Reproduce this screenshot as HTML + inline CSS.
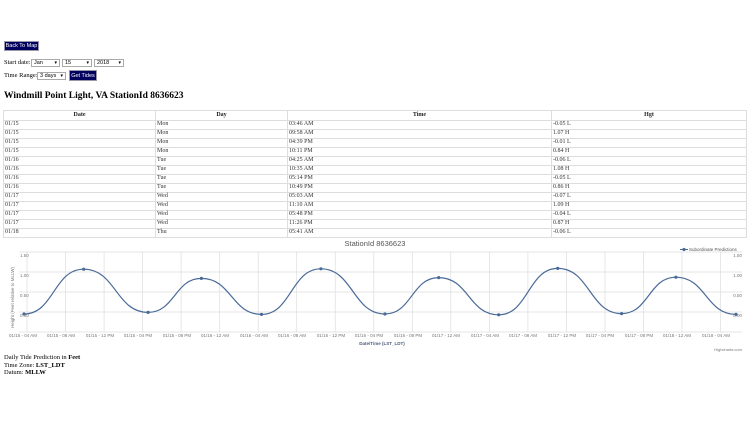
<!DOCTYPE html>
<html><head><meta charset="utf-8"><style>
*{margin:0;padding:0;box-sizing:border-box}
body{width:750px;height:422px;background:#fff;position:relative;overflow:hidden;font-family:"Liberation Serif",serif;color:#000}
.a{position:absolute;white-space:nowrap}
.btn{background:#00005e;color:#fff;font-family:"Liberation Sans",sans-serif;font-size:5.5px;border:1px solid #99a;padding:0}
.sel{border:1px solid #aaa;background:#fff;font-size:5.5px;font-family:"Liberation Sans",sans-serif;padding-left:2px;height:8px;line-height:7px}
.sel:after{content:"▾";position:absolute;right:2px;top:0;font-size:5px}
.lbl{font-size:6.5px}
table{position:absolute;left:3px;top:110px;width:744px;border-collapse:collapse;font-size:6px;color:#333}
td,th{border:1px solid #ddd;height:9px;padding:0 1px;line-height:7px;font-weight:normal}
th{font-weight:bold;color:#222;height:9.5px}
</style></head><body>
<div class="a btn" style="left:4px;top:41px;width:35px;height:10px;line-height:9px;text-align:center">Back To Map</div>
<div class="a lbl" style="left:4px;top:59px">Start date:</div>
<div class="a sel" style="left:31px;top:59px;width:29px">Jan</div>
<div class="a sel" style="left:62px;top:59px;width:30px">15</div>
<div class="a sel" style="left:94px;top:59px;width:30px">2018</div>
<div class="a lbl" style="left:4px;top:72px">Time Range:</div>
<div class="a sel" style="left:37px;top:72px;width:29px">3 days</div>
<div class="a btn" style="left:69px;top:70px;width:28px;height:11px;line-height:10px;text-align:center">Get Tides</div>
<div class="a" style="left:4px;top:91px;font-size:9.5px;font-weight:bold">Windmill Point Light, VA StationId 8636623</div>
<table>
<tr><th style="width:152px">Date</th><th style="width:132px">Day</th><th style="width:264px">Time</th><th>Hgt</th></tr>
<tr><td>01/15</td><td>Mon</td><td>03:46 AM</td><td>-0.05 L</td></tr>
<tr><td>01/15</td><td>Mon</td><td>09:58 AM</td><td>1.07 H</td></tr>
<tr><td>01/15</td><td>Mon</td><td>04:39 PM</td><td>-0.01 L</td></tr>
<tr><td>01/15</td><td>Mon</td><td>10:11 PM</td><td>0.84 H</td></tr>
<tr><td>01/16</td><td>Tue</td><td>04:25 AM</td><td>-0.06 L</td></tr>
<tr><td>01/16</td><td>Tue</td><td>10:35 AM</td><td>1.08 H</td></tr>
<tr><td>01/16</td><td>Tue</td><td>05:14 PM</td><td>-0.05 L</td></tr>
<tr><td>01/16</td><td>Tue</td><td>10:49 PM</td><td>0.86 H</td></tr>
<tr><td>01/17</td><td>Wed</td><td>05:03 AM</td><td>-0.07 L</td></tr>
<tr><td>01/17</td><td>Wed</td><td>11:10 AM</td><td>1.09 H</td></tr>
<tr><td>01/17</td><td>Wed</td><td>05:48 PM</td><td>-0.04 L</td></tr>
<tr><td>01/17</td><td>Wed</td><td>11:26 PM</td><td>0.87 H</td></tr>
<tr><td>01/18</td><td>Thu</td><td>05:41 AM</td><td>-0.06 L</td></tr>
</table>
<svg class="a" style="left:0;top:0" width="750" height="422" font-family="Liberation Sans, sans-serif">
<text x="375" y="246" font-size="7.5" fill="#555" text-anchor="middle">StationId 8636623</text>
<g stroke="#ddd" stroke-width="0.7">
<line x1="19" y1="252" x2="742" y2="252"/><line x1="19" y1="272" x2="742" y2="272"/><line x1="19" y1="292" x2="742" y2="292"/><line x1="19" y1="312" x2="742" y2="312"/><line x1="19" y1="332" x2="742" y2="332"/>
<line x1="27" y1="252" x2="27" y2="332"/><line x1="65.5" y1="252" x2="65.5" y2="332"/><line x1="104.1" y1="252" x2="104.1" y2="332"/><line x1="142.6" y1="252" x2="142.6" y2="332"/><line x1="181.1" y1="252" x2="181.1" y2="332"/><line x1="219.7" y1="252" x2="219.7" y2="332"/><line x1="258.2" y1="252" x2="258.2" y2="332"/><line x1="296.7" y1="252" x2="296.7" y2="332"/><line x1="335.2" y1="252" x2="335.2" y2="332"/><line x1="373.8" y1="252" x2="373.8" y2="332"/><line x1="412.3" y1="252" x2="412.3" y2="332"/><line x1="450.8" y1="252" x2="450.8" y2="332"/><line x1="489.4" y1="252" x2="489.4" y2="332"/><line x1="527.9" y1="252" x2="527.9" y2="332"/><line x1="566.4" y1="252" x2="566.4" y2="332"/><line x1="605" y1="252" x2="605" y2="332"/><line x1="643.5" y1="252" x2="643.5" y2="332"/><line x1="682" y1="252" x2="682" y2="332"/><line x1="720.5" y1="252" x2="720.5" y2="332"/>
</g>
<g font-size="4.5" fill="#777">
<text x="20" y="257">1.50</text><text x="20" y="277">1.00</text><text x="20" y="297">0.50</text><text x="20" y="317">0.00</text>
<g text-anchor="end"><text x="742" y="257">1.50</text><text x="742" y="277">1.00</text><text x="742" y="297">0.50</text><text x="742" y="317">0.00</text></g>
<text transform="translate(14,328) rotate(-90)">Height (Feet relative to MLLW)</text>
<g text-anchor="middle">
<text x="23" y="337">01/15 - 04 AM</text><text x="61" y="337">01/15 - 08 AM</text><text x="100" y="337">01/15 - 12 PM</text><text x="138" y="337">01/15 - 04 PM</text><text x="177" y="337">01/15 - 08 PM</text><text x="215" y="337">01/16 - 12 AM</text><text x="254" y="337">01/16 - 04 AM</text><text x="292" y="337">01/16 - 08 AM</text><text x="331" y="337">01/16 - 12 PM</text><text x="369" y="337">01/16 - 04 PM</text><text x="408" y="337">01/16 - 08 PM</text><text x="446" y="337">01/17 - 12 AM</text><text x="485" y="337">01/17 - 04 AM</text><text x="523" y="337">01/17 - 08 AM</text><text x="562" y="337">01/17 - 12 PM</text><text x="600" y="337">01/17 - 04 PM</text><text x="639" y="337">01/17 - 08 PM</text><text x="677" y="337">01/18 - 12 AM</text><text x="716" y="337">01/18 - 04 AM</text>
</g>
<text x="382" y="345" text-anchor="middle" fill="#4a5a7a" font-weight="bold">Date/Time (LST_LDT)</text>
<text x="742" y="351" text-anchor="end" font-size="4">Highcharts.com</text>
<text x="689" y="251" fill="#555">Subordinate Predictions</text>
</g>
<line x1="680" y1="249.5" x2="688" y2="249.5" stroke="#4a6a98" stroke-width="1"/><circle cx="684" cy="249.5" r="1.6" fill="#4a6a98"/>
<path fill="none" stroke="#4a6a98" stroke-width="1.2" d="M24,314 C53.9,314 53.8,269.2 83.7,269.2 C115.9,269.2 115.9,312.4 148.1,312.4 C174.8,312.4 174.8,278.4 201.4,278.4 C231.5,278.4 231.5,314.4 261.5,314.4 C291.2,314.4 291.2,268.8 320.9,268.8 C352.9,268.8 352.9,314 384.9,314 C411.8,314 411.8,277.6 438.7,277.6 C468.7,277.6 468.7,314.8 498.7,314.8 C528.2,314.8 528.2,268.4 557.7,268.4 C589.7,268.4 589.7,313.6 621.6,313.6 C648.8,313.6 648.8,277.2 675.9,277.2 C706,277.2 706,314.4 736,314.4"/>
<g fill="#4a6a98"><circle cx="24" cy="314" r="1.6"/><circle cx="83.7" cy="269.2" r="1.6"/><circle cx="148.1" cy="312.4" r="1.6"/><circle cx="201.4" cy="278.4" r="1.6"/><circle cx="261.5" cy="314.4" r="1.6"/><circle cx="320.9" cy="268.8" r="1.6"/><circle cx="384.9" cy="314" r="1.6"/><circle cx="438.7" cy="277.6" r="1.6"/><circle cx="498.7" cy="314.8" r="1.6"/><circle cx="557.7" cy="268.4" r="1.6"/><circle cx="621.6" cy="313.6" r="1.6"/><circle cx="675.9" cy="277.2" r="1.6"/><circle cx="736" cy="314.4" r="1.6"/></g>
</svg>
<div class="a" style="left:4px;top:354px;font-size:6.5px;line-height:7.5px">Daily Tide Prediction in <b>Feet</b><br>Time Zone: <b>LST_LDT</b><br>Datum: <b>MLLW</b></div>
</body></html>
